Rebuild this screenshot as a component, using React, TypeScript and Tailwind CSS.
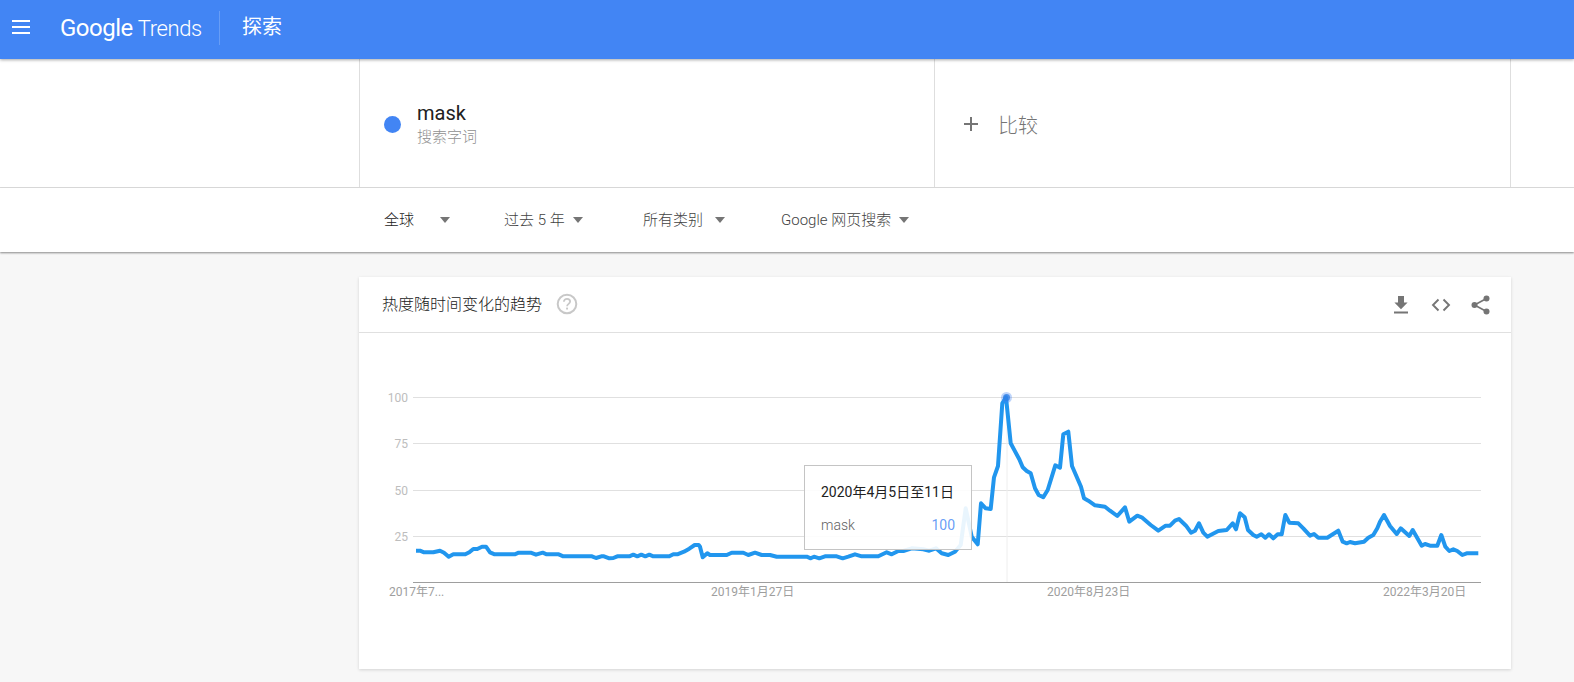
const z6: number[][] = [[48,152],[60,152],[72,157],[100,157],[120,152],[132,158],[146,170],[160,163],[196,163],[208,157],[220,147],[232,147],[246,140],[258,140],[270,157],[284,163],[344,163],[356,158],[392,158],[408,164],[428,158],[440,163],[476,163],[490,169],[576,169],[588,174],[604,169],[612,169],[628,175],[640,174],[652,169],[688,169],[700,164],[712,169],[724,164],[736,169],[748,164],[760,169],[808,169],[820,163],[832,163],[852,155],[868,146],[884,135],[896,135]];
const z7: number[][] = [[0,140],[8,172],[22,160],[30,165],[80,165],[95,158],[130,158],[145,165],[165,158],[185,165],[210,165],[230,170],[320,170],[332,175],[342,170],[358,175],[375,169],[410,169],[428,175],[445,170],[465,163],[485,169],[535,169],[560,157],[575,163],[595,153],[610,153],[635,145],[670,148],[688,152],[708,145],[725,160],[745,165],[765,155],[782,135],[797,25],[815,110],[833,133]];
const z8: number[][] = [[3,370],[17,385],[32,387],[42,292],[54,258],[67,70],[78,52],[92,190],[118,238],[128,262],[140,273],[152,280],[165,325],[176,345],[190,352],[203,330],[226,256],[240,263],[250,163],[265,155],[276,258],[303,320],[312,355],[325,362],[345,376]];
const z5: number[][] = [[15,710],[30,722],[52,738],[75,712],[88,755],[112,737],[125,742],[152,765],[175,782],[197,767],[210,767],[225,752],[237,747],[258,767],[273,788],[285,782],[297,760],[310,788],[322,800],[355,783],[380,780],[398,760],[408,778],[420,730],[434,742],[444,780],[460,795],[470,800],[484,793],[496,803],[507,793],[520,805],[533,793],[545,793],[556,735],[568,758],[595,760],[610,775],[630,797],[642,792],[655,803],[682,803],[715,782],[728,815],[740,820],[750,816],[765,820],[792,815],[805,803],[820,795],[832,775],[840,755],[852,735],[870,768],[890,792],[902,775],[928,798],[938,780],[965,827],[975,822],[990,827],[1012,827],[1024,795],[1036,830],[1048,843],[1060,838],[1072,843],[1087,855],[1100,850],[1135,850]];

const map = (pts: number[][], ox: number, oy: number) =>
  pts.map(([x, y]) => `${(ox + x / 3).toFixed(1)},${(oy + y / 3).toFixed(1)}`).join(" ");

const line = [map(z6, 400, 500), map(z7, 700, 500), map(z8, 980, 380), map(z5, 1100, 270)].join(" ");

const font = { fontFamily: 'Roboto, "Noto Sans CJK SC", sans-serif' };

function Caret() {
  return <span className="inline-block h-0 w-0 border-x-[5.5px] border-t-[6px] border-x-transparent border-t-[#757575]" />;
}

function Filter({ label, width, gap, dark }: { label: string; width: string; gap: string; dark?: boolean }) {
  return (
    <div className={`flex items-center ${width} ${gap}`}>
      <span className={`whitespace-nowrap text-[15px] font-light ${dark ? "text-[#212121]" : "text-[#424242]"}`}>{label}</span>
      <Caret />
    </div>
  );
}

export default function App() {
  const grid = [397.5, 443.5, 490.5, 536.5];
  const yl = ["100", "75", "50", "25"];
  return (
    <div className="relative h-[682px] w-[1574px] overflow-hidden bg-[#f7f7f7]" style={font}>
      <header className="relative z-10 flex h-[59px] items-center bg-[#4285f4] pl-3 text-white shadow-[0_1px_3px_rgba(0,0,0,0.35)]">
        <svg width="18" height="14" viewBox="0 0 18 14" fill="white" className="mb-[5px]">
          <rect x="0" y="0" width="18" height="2" />
          <rect x="0" y="6" width="18" height="2" />
          <rect x="0" y="12" width="18" height="2" />
        </svg>
        <div className="mb-[4px] ml-[30px] flex w-[142px] items-baseline whitespace-nowrap leading-none">
          <span className="text-[24px] tracking-[-0.5px]">Google</span>
          <span className="ml-[5px] text-[22px] tracking-[-0.4px] font-light">Trends</span>
        </div>
        <div className="ml-[17px] mb-[4px] h-[34px] w-px bg-white/20" />
        <div className="mb-[6px] ml-[22px] text-[20px] leading-none">探索</div>
      </header>

      <section className="flex h-[129px] border-b border-[#dedede] bg-white">
        <div className="ml-[359px] flex w-[576px] items-center border-x border-[#dedede] pl-[24px] pt-[2px]">
          <span className="h-[17px] w-[17px] rounded-full bg-[#4285f4]" />
          <div className="ml-[16px] pb-[1px]">
            <div className="text-[20px] leading-[22px] text-[#212121]">mask</div>
            <div className="mt-[4px] text-[15px] font-light leading-[18px] text-[#8f8f8f]">搜索字词</div>
          </div>
        </div>
        <div className="flex w-[576px] items-center border-r border-[#dedede] pl-[28px] pt-[5px] text-[#757575]">
          <svg width="16" height="16" viewBox="0 0 16 16" fill="#757575" className="-mt-[3px]">
            <rect x="7" y="1" width="2" height="14" />
            <rect x="1" y="7" width="14" height="2" />
          </svg>
          <span className="ml-[19px] text-[20px] font-light leading-none">比较</span>
        </div>
      </section>

      <section className="relative z-[5] flex h-[64px] items-center bg-white pl-[384px] shadow-[0_1px_2px_rgba(0,0,0,0.45)]">
        <Filter label="全球" width="w-[120px]" gap="gap-[26px]" dark />
        <Filter label="过去 5 年" width="w-[139px]" gap="gap-[8px]" />
        <Filter label="所有类别" width="w-[138px]" gap="gap-[12px]" />
        <Filter label="Google 网页搜索" width="w-[140px]" gap="gap-[8px]" />
      </section>

      <section className="relative ml-[359px] mt-[25px] h-[392px] w-[1152px] bg-white shadow-[0_1px_3px_rgba(0,0,0,0.15)]">
        <div className="flex h-[56px] items-center border-b border-[#e0e0e0] pl-[23px] pr-[21px]">
          <span className="text-[16px] font-light text-[#212121]">热度随时间变化的趋势</span>
          <svg width="22" height="22" viewBox="0 0 22 22" className="ml-[14px] mb-[2px]" fill="none">
            <circle cx="11" cy="11" r="9.3" stroke="#c8c8c8" strokeWidth="2" />
            <path d="M7.9 8.8c0-1.9 1.4-3 3.1-3s3.1 1.1 3.1 2.8c0 2.2-3 2.3-3 4.6" stroke="#c8c8c8" strokeWidth="1.8" />
            <rect x="10.1" y="14.6" width="1.9" height="1.9" fill="#c8c8c8" />
          </svg>
          <div className="ml-auto flex items-center">
            <svg width="16" height="18" viewBox="0 0 16 18" fill="#757575">
              <path d="M5 0h6v6.5h3.6L8 13.2 1.4 6.5H5z" />
              <rect x="1" y="15.5" width="14" height="2" />
            </svg>
            <svg width="20" height="14" viewBox="0 0 20 14" fill="none" stroke="#757575" strokeWidth="1.9" className="ml-[22px]">
              <path d="M7.5 1.5 2 7l5.5 5.5M12.5 1.5 18 7l-5.5 5.5" />
            </svg>
            <svg width="19" height="20" viewBox="0 0 19 20" fill="#757575" className="ml-[20px]">
              <circle cx="15.5" cy="3.5" r="3" />
              <circle cx="3.5" cy="10" r="3" />
              <circle cx="15.5" cy="16.5" r="3" />
              <path d="M3.5 10 15.5 3.5M3.5 10l12 6.5" stroke="#757575" strokeWidth="1.6" />
            </svg>
          </div>
        </div>

        <svg width="1152" height="336" viewBox="359 333 1152 336" className="block">
          {grid.map((y) => (
            <line key={y} x1="413" x2="1481" y1={y} y2={y} stroke="#e0e0e0" strokeWidth="1" />
          ))}
          {grid.map((y, i) => (
            <text key={y} x="408" y={y + 4} textAnchor="end" fontSize="12" fill="#bdbdbd">{yl[i]}</text>
          ))}
          <line x1="1007" x2="1007" y1="397" y2="582" stroke="#eeeeee" strokeWidth="1" />
          <line x1="413" x2="1481" y1="582.5" y2="582.5" stroke="#9e9e9e" strokeWidth="1" />
          <polyline points={line} fill="none" stroke="#2196ee" strokeWidth="4" strokeLinejoin="round" strokeLinecap="butt" />
          <circle cx="1006.5" cy="397.5" r="5.5" fill="#4285f4" opacity="0.35" />
          <circle cx="1006.5" cy="397.5" r="3.5" fill="#2f7fe6" opacity="0.8" />
          <text x="389" y="596" fontSize="12" fill="#9e9e9e">2017年7...</text>
          <text x="711" y="596" fontSize="12" fill="#9e9e9e">2019年1月27日</text>
          <text x="1047" y="596" fontSize="12" fill="#9e9e9e">2020年8月23日</text>
          <text x="1383" y="596" fontSize="12" fill="#9e9e9e">2022年3月20日</text>
        </svg>

        <div className="absolute left-[445px] top-[188px] h-[85px] w-[168px] border border-[#c4c4c4] bg-white/90 px-[16px] pt-[16px]">
          <div className="whitespace-nowrap text-[14px] leading-[20px] text-[#212121]">2020年4月5日至11日</div>
          <div className="mt-[13px] flex justify-between text-[14px] leading-[20px]">
            <span className="font-light text-[#616161]">mask</span>
            <span className="text-[#4285f4]/80">100</span>
          </div>
        </div>
      </section>
    </div>
  );
}
